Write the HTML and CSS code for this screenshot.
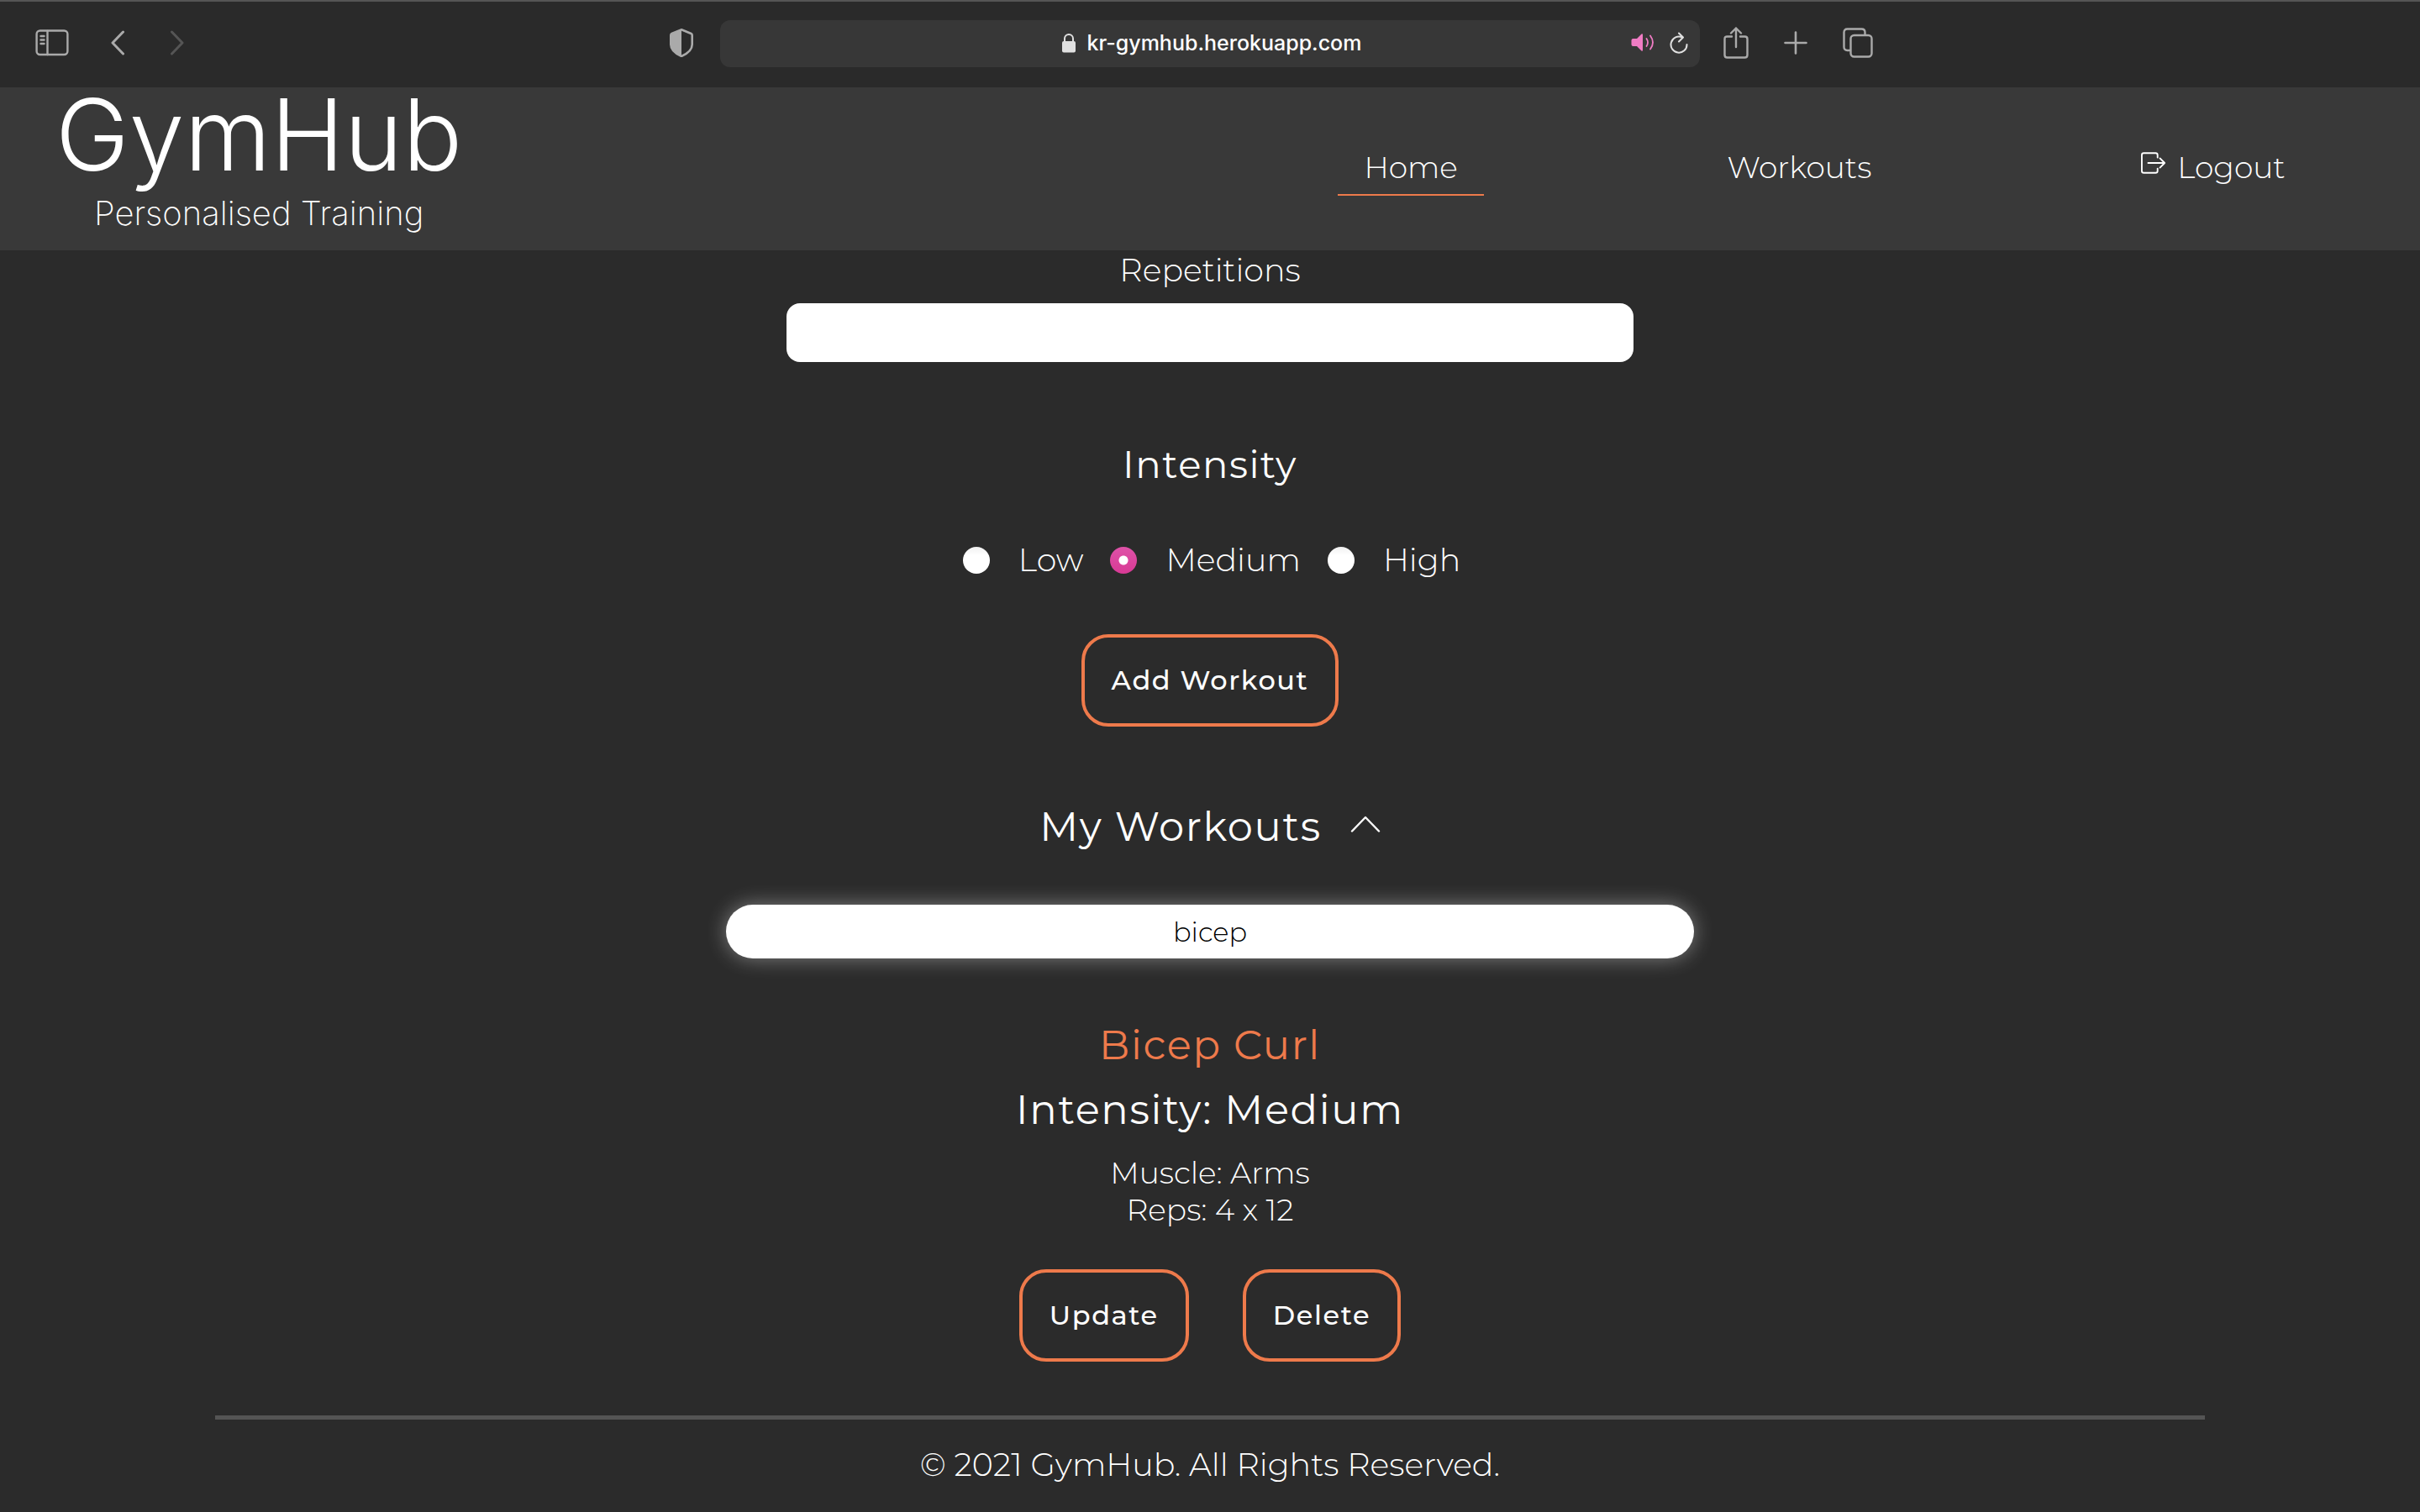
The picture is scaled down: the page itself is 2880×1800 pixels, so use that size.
FILE: index.html
```html
<!DOCTYPE html>
<html lang="en">
<head>
<meta charset="utf-8">
<title>GymHub</title>
<link rel="stylesheet" href="styles.css">
</head>
<body>
<div class="toolbar">
  <div class="toolbar-side">
    <button class="tool" type="button" aria-label="Show sidebar">
      <svg width="40" height="32" viewBox="0 0 40 32" fill="none" stroke="currentColor" stroke-width="2.400" stroke-linecap="round"><rect x="1.600" y="1.500" width="36.800" height="28.500" rx="4"/><path d="M14.500 2v28M6.500 8h4M6.500 12.500h4M6.500 17h4"/></svg>
    </button>
    <button class="tool tool-back" type="button" aria-label="Back">
      <svg width="16" height="32" viewBox="0 0 16 32" fill="none" stroke="currentColor" stroke-width="3" stroke-linecap="round" stroke-linejoin="round"><path d="M14.500 3 2 16l12.500 13"/></svg>
    </button>
    <button class="tool tool-forward" type="button" aria-label="Forward" disabled>
      <svg width="16" height="32" viewBox="0 0 16 32" fill="none" stroke="currentColor" stroke-width="3" stroke-linecap="round" stroke-linejoin="round"><path d="M1.500 3 14 16 1.500 29"/></svg>
    </button>
    <button class="tool tool-shield" type="button" aria-label="Privacy report">
      <svg width="28" height="34" viewBox="0 0 28 34"><path d="M14 1.300 25.500 6Q26.700 6.600 26.700 8v11c0 7-6 11-12.700 14C7.300 30 1.300 26 1.300 19V8Q1.300 6.600 2.500 6z" fill="none" stroke="currentColor" stroke-width="2.600"/><path d="M14 1v32C6 29 1.300 26 1.300 19V7z" fill="currentColor"/></svg>
    </button>
  </div>
  <div class="address">
    <span class="address-url">
      <svg width="16" height="24" viewBox="0 0 16 24"><rect y="10" width="16" height="13.500" rx="2" fill="#e0e0e0"/><path d="M3 11V7a5 5 0 0 1 10 0v4" fill="none" stroke="#e0e0e0" stroke-width="2"/></svg>
      kr-gymhub.herokuapp.com
    </span>
    <button class="tool tool-sound" type="button" aria-label="Mute tab">
      <svg width="28" height="24" viewBox="0 0 28 24"><path d="M2.500 7H7l5.500-5.500Q14 .5 14 2.500v18q0 2-1.500 1L7 16H2.500Q.5 16 .5 14V9q0-2 2-2z" fill="currentColor"/><path d="M18.500 7q3 4.500 0 9M23 3.500q6 8 0 16" fill="none" stroke="currentColor" stroke-width="1.800" stroke-linecap="round"/></svg>
    </button>
    <button class="tool tool-reload" type="button" aria-label="Reload">
      <svg width="22" height="28" viewBox="0 0 22 28" fill="none" stroke="currentColor" stroke-width="2" stroke-linecap="round" stroke-linejoin="round"><path d="M15 7.500A9.500 9.500 0 1 0 20.500 16M11 2.500l5 5-5 5"/></svg>
    </button>
  </div>
  <div class="toolbar-side toolbar-end">
    <button class="tool" type="button" aria-label="Share">
      <svg width="30" height="38" viewBox="0 0 30 38" fill="none" stroke="currentColor" stroke-width="2.400" stroke-linecap="round" stroke-linejoin="round"><path d="M10 11.500H4.500q-3 0-3 3v19q0 3 3 3h21q3 0 3-3v-19q0-3-3-3H20M15 24V1.500M9 7.500l6-6 6 6"/></svg>
    </button>
    <button class="tool" type="button" aria-label="New tab">
      <svg width="28" height="28" viewBox="0 0 28 28" fill="none" stroke="currentColor" stroke-width="2.600" stroke-linecap="round"><path d="M14 1.500v25M1.500 14h25"/></svg>
    </button>
    <button class="tool" type="button" aria-label="Tab overview">
      <svg width="36" height="36" viewBox="0 0 36 36" fill="none" stroke="currentColor" stroke-width="2.400"><rect x="9.500" y="9" width="25" height="25.500" rx="4"/><path d="M9.500 27H5.500q-4 0-4-4V5.500q0-4 4-4h17q4 0 4 4V9"/></svg>
    </button>
  </div>
</div>

<header class="site-header">
  <a class="logo" href="#home">
    <span class="logo-name">GymHub</span>
    <span class="logo-tagline">Personalised Training</span>
  </a>
  <nav class="site-nav">
    <a class="nav-link nav-link-active" href="#home">Home</a>
    <a class="nav-link" href="#workouts">Workouts</a>
    <a class="nav-link" href="#logout">
      <svg class="logout-icon" width="30" height="28" viewBox="0 0 32 28" fill="none" stroke="currentColor" stroke-width="2" stroke-linecap="round" stroke-linejoin="round"><path d="M21 7V4q0-2.500-2.500-2.500h-15Q1 1.500 1 4v20q0 2.500 2.500 2.500h15Q21 26.500 21 24v-3M9 14h21M24 8l6 6-6 6"/></svg>
      Logout
    </a>
  </nav>
</header>

<main class="page">
  <form class="workout-form">
    <label class="field-label" for="reps">Repetitions</label>
    <input class="field-input" id="reps" type="text">
    <h3 class="form-heading" id="intensity">Intensity</h3>
    <div class="intensity" role="radiogroup" aria-labelledby="intensity">
      <label class="choice"><input class="choice-radio" type="radio" name="intensity" value="low">Low</label>
      <label class="choice"><input class="choice-radio" type="radio" name="intensity" value="medium" checked>Medium</label>
      <label class="choice"><input class="choice-radio" type="radio" name="intensity" value="high">High</label>
    </div>
    <button class="button" type="button">Add Workout</button>
  </form>

  <section class="workouts">
    <h2 class="section-heading">My Workouts
      <svg class="section-chevron" width="36" height="20" viewBox="0 0 36 20" fill="none" stroke="currentColor" stroke-width="2.400" stroke-linecap="round" stroke-linejoin="round"><path d="M2 18.500 18 2l16 16.500"/></svg>
    </h2>
    <input class="search" type="text" value="bicep" aria-label="Search workouts">
    <article class="workout">
      <h2 class="workout-title">Bicep Curl</h2>
      <h2 class="workout-intensity">Intensity: Medium</h2>
      <p class="workout-detail">Muscle: Arms</p>
      <p class="workout-detail">Reps: 4 x 12</p>
      <div class="workout-actions">
        <button class="button" type="button">Update</button>
        <button class="button" type="button">Delete</button>
      </div>
    </article>
  </section>
</main>

<footer class="site-footer">© 2021 GymHub. All Rights Reserved.</footer>
</body>
</html>
```

FILE: styles.css
```css
* {
  box-sizing: border-box;
}

body {
  margin: 0;
  background: #2b2b2b;
  color: #fff;
  font-family: Montserrat, Inter, sans-serif;
  font-size: 38px;
  font-weight: 300;
  line-height: 44px;
}

h2,
h3,
p {
  margin: 0;
  font-weight: 400;
}

h2,
h3 {
  letter-spacing: 0.035em;
}

button,
input {
  font-family: inherit;
}

a {
  color: inherit;
  text-decoration: none;
}

/* Browser toolbar */
.toolbar {
  display: flex;
  align-items: center;
  height: 104px;
  padding-bottom: 2px;
  border-top: 2px solid #555;
  background: #2a2a2a;
}

.toolbar-side {
  display: flex;
  flex: 1;
  align-items: center;
  padding: 0 32px 2px 42px;
}

.toolbar-end {
  gap: 42px;
  padding: 0 46px 2px 28px;
}

.tool {
  display: flex;
  padding: 0;
  border: 0;
  background: none;
  color: #aaa;
}

.tool-back {
  margin-left: 50px;
}

.tool-forward {
  margin-left: 55px;
  color: #555;
}

.tool-shield {
  margin-left: auto;
}

.address {
  display: flex;
  align-items: center;
  gap: 18px;
  width: 1166px;
  height: 56px;
  padding: 0 14px 3px 104px;
  border-radius: 12px;
  background: #373737;
}

.address-url {
  display: flex;
  flex: 1;
  align-items: center;
  justify-content: center;
  gap: 14px;
  font: 500 25px/32px Inter, sans-serif;
}

.tool-sound {
  color: #f07cc4;
}

.tool-reload {
  color: #e0e0e0;
}

/* Site header */
.site-header {
  display: flex;
  align-items: center;
  justify-content: space-between;
  height: 194px;
  background: #393939;
}

.logo {
  display: flex;
  flex-direction: column;
  align-items: center;
  align-self: flex-start;
  margin-left: 66px;
}

.logo-name {
  font: 300 118px/112px Inter, sans-serif;
}

.logo-tagline {
  margin-top: 14px;
  font: 200 40px/48px Inter, sans-serif;
}

.site-nav {
  display: flex;
  flex: 0 0 49.2%;
  justify-content: space-around;
  padding-top: 8px;
  font-size: 36px;
}

.nav-link {
  padding: 0 31px 10px;
  border-bottom: 2px solid transparent;
}

.nav-link-active {
  border-color: #ee7a4b;
}

.logout-icon {
  margin-right: 4px;
  vertical-align: 4px;
}

/* Workout form */
.workout-form,
.workouts,
.workout {
  display: flex;
  flex-direction: column;
  align-items: center;
}

.field-label {
  margin: 2px 0 17px;
}

.field-input {
  width: 35%;
  height: 70px;
  padding: 0 16px;
  border: 0;
  border-radius: 16px;
  background: #fff;
  font-size: 32px;
}

.form-heading {
  margin-top: 94px;
  font-size: 45px;
  line-height: 56px;
}

.intensity {
  display: flex;
  gap: 32px;
  margin: 64px 0 66px;
  padding-left: 4px;
}

.choice {
  display: flex;
  align-items: center;
  gap: 34px;
}

.choice-radio {
  width: 32px;
  height: 32px;
  margin: 0;
  border-radius: 50%;
  appearance: none;
  background: linear-gradient(#f0f0f0, #fff 30%);
}

.choice-radio:checked {
  background: radial-gradient(circle, #fff 5px, transparent 6px), linear-gradient(#df52a8, #d83a95);
}

.button {
  height: 110px;
  padding: 0 32px 2px;
  border: 4px solid #ee7a4b;
  border-radius: 32px;
  background: transparent;
  color: #fff;
  font-size: 32px;
  font-weight: 500;
  letter-spacing: 0.05em;
}

/* Saved workouts */
.section-heading {
  display: flex;
  align-items: center;
  gap: 34px;
  margin: 89px 0 63px;
  font-size: 48px;
  line-height: 60px;
}

.section-chevron {
  margin-bottom: 6px;
}

.search {
  width: 40%;
  height: 64px;
  padding: 0 32px;
  border: 0;
  border-radius: 32px;
  background: #fff;
  box-shadow: 0 0 24px rgba(255, 255, 255, 0.4);
  color: #000;
  font-size: 32px;
  font-weight: 300;
  text-align: center;
}

.workout {
  margin-top: 73px;
}

.workout-title,
.workout-intensity {
  font-size: 48px;
  line-height: 60px;
}

.workout-title {
  margin-bottom: 17px;
  color: #ee7a4b;
}

.workout-intensity {
  margin-bottom: 23px;
}

.workout-detail {
  font-size: 36px;
  font-weight: 300;
}

.workout-actions {
  display: flex;
  gap: 64px;
  margin-top: 49px;
}

.site-footer {
  margin: 64px 256px 0;
  padding-top: 32px;
  border-top: 5px solid #545454;
  text-align: center;
}
```
